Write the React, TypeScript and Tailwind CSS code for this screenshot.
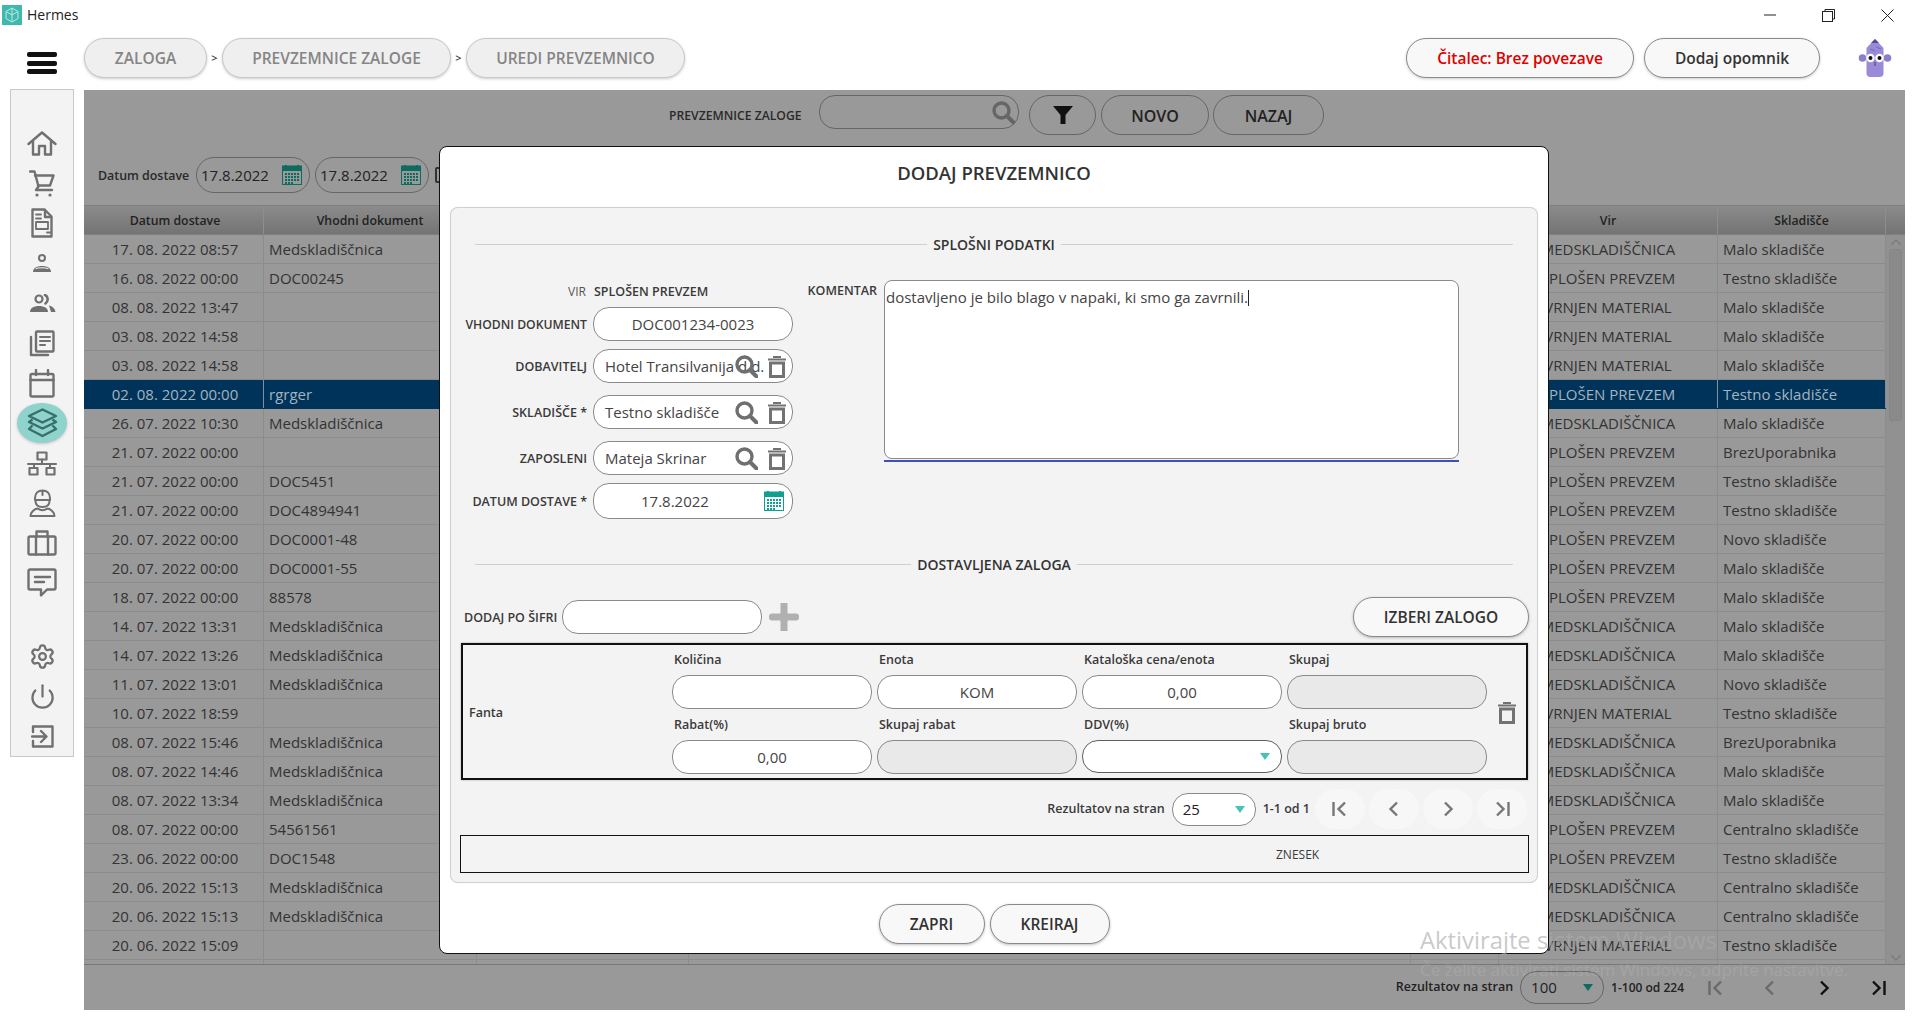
import React from "react";
import { Settings, Power } from "lucide-react";

const M = "Medskladiščnica";
const rows: [string, string, string, string][] = [
  ["17. 08. 2022 08:57", M, "MEDSKLADIŠČNICA", "Malo skladišče"],
  ["16. 08. 2022 00:00", "DOC00245", "SPLOŠEN PREVZEM", "Testno skladišče"],
  ["08. 08. 2022 13:47", "", "VRNJEN MATERIAL", "Malo skladišče"],
  ["03. 08. 2022 14:58", "", "VRNJEN MATERIAL", "Malo skladišče"],
  ["03. 08. 2022 14:58", "", "VRNJEN MATERIAL", "Malo skladišče"],
  ["02. 08. 2022 00:00", "rgrger", "SPLOŠEN PREVZEM", "Testno skladišče"],
  ["26. 07. 2022 10:30", M, "MEDSKLADIŠČNICA", "Malo skladišče"],
  ["21. 07. 2022 00:00", "", "SPLOŠEN PREVZEM", "BrezUporabnika"],
  ["21. 07. 2022 00:00", "DOC5451", "SPLOŠEN PREVZEM", "Testno skladišče"],
  ["21. 07. 2022 00:00", "DOC4894941", "SPLOŠEN PREVZEM", "Testno skladišče"],
  ["20. 07. 2022 00:00", "DOC0001-48", "SPLOŠEN PREVZEM", "Novo skladišče"],
  ["20. 07. 2022 00:00", "DOC0001-55", "SPLOŠEN PREVZEM", "Malo skladišče"],
  ["18. 07. 2022 00:00", "88578", "SPLOŠEN PREVZEM", "Malo skladišče"],
  ["14. 07. 2022 13:31", M, "MEDSKLADIŠČNICA", "Malo skladišče"],
  ["14. 07. 2022 13:26", M, "MEDSKLADIŠČNICA", "Malo skladišče"],
  ["11. 07. 2022 13:01", M, "MEDSKLADIŠČNICA", "Novo skladišče"],
  ["10. 07. 2022 18:59", "", "VRNJEN MATERIAL", "Testno skladišče"],
  ["08. 07. 2022 15:46", M, "MEDSKLADIŠČNICA", "BrezUporabnika"],
  ["08. 07. 2022 14:46", M, "MEDSKLADIŠČNICA", "Malo skladišče"],
  ["08. 07. 2022 13:34", M, "MEDSKLADIŠČNICA", "Malo skladišče"],
  ["08. 07. 2022 00:00", "54561561", "SPLOŠEN PREVZEM", "Centralno skladišče"],
  ["23. 06. 2022 00:00", "DOC1548", "SPLOŠEN PREVZEM", "Testno skladišče"],
  ["20. 06. 2022 15:13", M, "MEDSKLADIŠČNICA", "Centralno skladišče"],
  ["20. 06. 2022 15:13", M, "MEDSKLADIŠČNICA", "Centralno skladišče"],
  ["20. 06. 2022 15:09", "", "VRNJEN MATERIAL", "Testno skladišče"],
  ["", "", "", ""],
];

const ICON = "#707070";

function Svg({ w, h, children }: { w: number; h: number; children: React.ReactNode }) {
  return (
    <svg width={w} height={h} viewBox={`0 0 ${w} ${h}`} fill="none" stroke={ICON} strokeWidth={2.4} strokeLinejoin="round" strokeLinecap="round">
      {children}
    </svg>
  );
}

const HomeI = () => (
  <Svg w={30} h={25}>
    <path d="M1.5 13 15 1.5 28.5 13" />
    <path d="M6 10v13.500h6V15h6v8.500h6V10" />
  </Svg>
);
const CartI = () => (
  <Svg w={26} h={27}>
    <path d="M1 1.500h4.500L9.500 16.500 7 20h16" />
    <path d="M6 5.500h18.500L21 15.500H9" />
    <circle cx="8" cy="25" r="1.600" fill={ICON} stroke="none" />
    <circle cx="21" cy="25" r="1.600" fill={ICON} stroke="none" />
  </Svg>
);
const DocI = () => (
  <Svg w={22} h={30}>
    <path d="M1.500 1.500h12l7 7v20h-19z" />
    <path d="M14 2v7h6" />
    <path d="M5 6.500h5M5 10.500h5M16 24.500h3" strokeWidth={1.800} />
    <rect x="5" y="14" width="12" height="7" strokeWidth={1.800} />
  </Svg>
);
const PersonI = () => (
  <Svg w={20} h={19}>
    <circle cx="10" cy="4" r="3" strokeWidth={2} />
    <path d="M1 18c0-4 4-6 9-6s9 2 9 6z" fill={ICON} stroke="none" />
    <path d="M4 14.500c2-1 10-1 12 0" stroke="#f3f3f3" strokeWidth={1} />
  </Svg>
);
const PeopleI = () => (
  <Svg w={27} h={19}>
    <circle cx="10" cy="5" r="3.500" strokeWidth={2.200} />
    <path d="M1 18c0-4 4-6 9-6s9 2 9 6z" fill={ICON} stroke="none" />
    <path d="M16 1c3 1 3.800 6 .5 8.500" strokeWidth={2.600} />
    <path d="M20 11.500c3 .5 6 3 6.500 6.500H22z" fill={ICON} stroke="none" />
  </Svg>
);
const NewsI = () => (
  <Svg w={26} h={27}>
    <rect x="7" y="1.500" width="17.500" height="20" rx="1" />
    <path d="M11 7h10M11 11h10M11 15h5" strokeWidth={2} />
    <path d="M2 7v18h17" />
  </Svg>
);
const CalI = () => (
  <Svg w={26} h={29}>
    <rect x="1.500" y="5" width="23" height="22.500" rx="1.500" />
    <path d="M1.500 11h23M7 1v5M19 1v5" />
  </Svg>
);
const LayersI = () => (
  <svg width="31" height="30" viewBox="0 0 31 30" fill="none" stroke="#35706c" strokeWidth="2.400" strokeLinejoin="round">
    <path d="M15.500 1.500 29 8l-13.500 6.500L2 8z" />
    <path d="M5.500 11.500 2 14l13.500 6.500L29 14l-3.500-2.500" />
    <path d="M5.500 17.500 2 21l13.500 7L29 21l-3.500-3.500" />
  </svg>
);
const NetI = () => (
  <Svg w={30} h={25}>
    <rect x="10.500" y="1.500" width="9" height="7" strokeWidth={2.200} />
    <path d="M1 13h28M15 8.500V13M7 13v4M23 13v4" strokeWidth={2} />
    <rect x="2.500" y="17" width="8" height="6.500" strokeWidth={2.200} />
    <rect x="19.500" y="17" width="8" height="6.500" strokeWidth={2.200} />
  </Svg>
);
const WorkerI = () => (
  <Svg w={27} h={28}>
    <path d="M6 11V9c0-4.500 3-7.500 7.500-7.500S21 4.500 21 9v2z" strokeWidth={2} />
    <path d="M13.500 2v4" strokeWidth={2} />
    <path d="M6.500 12c0 4 3 6 7 6s7-2 7-6" strokeWidth={2} />
    <path d="M1.500 27c0-4 4-7 7-7.500 3 2 7 2 10 0 3 .5 7 3.500 7 7.500z" strokeWidth={2} />
  </Svg>
);
const BriefI = () => (
  <Svg w={30} h={26}>
    <rect x="1.500" y="6.500" width="27" height="18" rx="1.500" />
    <path d="M9.500 6.500V1.500h11v5M9 6.500v18M21 6.500v18" />
  </Svg>
);
const ChatI = () => (
  <Svg w={30} h={30}>
    <path d="M3 1.500h24a1.500 1.500 0 0 1 1.500 1.500v17a1.500 1.500 0 0 1-1.500 1.500H20l-6 6v-6H3A1.500 1.500 0 0 1 1.500 20V3A1.500 1.500 0 0 1 3 1.500z" />
    <path d="M8 9h15M8 14h9" />
  </Svg>
);
const ExitI = () => (
  <Svg w={23} h={23}>
    <path d="M2 7V1.500h19.500v20H2V16" />
    <path d="M1 11.500h14M10 6l5.500 5.500L10 17" />
  </Svg>
);

function SearchI({ c = "#6f6f6f" }: { c?: string }) {
  return (
    <svg width="23" height="23" viewBox="0 0 23 23" fill="none" stroke={c}>
      <circle cx="9.500" cy="9.500" r="7.500" strokeWidth="3.400" />
      <path d="M15 15l6.500 6.500" strokeWidth="4" strokeLinecap="round" />
    </svg>
  );
}
function TrashI({ c = "#727272" }: { c?: string }) {
  return (
    <svg width="18" height="22" viewBox="0 0 18 22" fill="none" stroke={c}>
      <path d="M0 3.500h18" strokeWidth="2" />
      <path d="M5 1h8" strokeWidth="2" />
      <rect x="2.500" y="7" width="13" height="13.500" strokeWidth="3" />
    </svg>
  );
}
function CalendarI({ c }: { c: string }) {
  const dots: React.ReactNode[] = [];
  [8, 11, 14, 17].forEach((y) =>
    [3, 6, 9, 12, 15].forEach((x) => {
      if (!(y === 17 && x > 9)) dots.push(<rect key={`${x}-${y}`} x={x} y={y} width="2" height="2" fill={c} />);
    })
  );
  return (
    <svg width="20" height="20" viewBox="0 0 20 20">
      <rect x=".5" y="1" width="19" height="18.500" fill="none" stroke={c} />
      <rect x="0" y="1" width="20" height="5" fill={c} />
      <rect x="3" y="0" width="2" height="2" fill={c} />
      <rect x="15" y="0" width="2" height="2" fill={c} />
      {dots}
    </svg>
  );
}
function Tri({ c }: { c: string }) {
  return (
    <svg width="10" height="7" viewBox="0 0 10 7">
      <path d="M0 0h10L5 7z" fill={c} />
    </svg>
  );
}
function Chev({ d, c }: { d: string; c: string }) {
  return (
    <svg width="18" height="18" viewBox="0 0 18 18" fill="none" stroke={c} strokeWidth="2.400">
      <path d={d} />
    </svg>
  );
}
const first = "M2.500 2v14M14 2.500 7.500 9l6.500 6.500";
const prev = "M12 2.500 5.500 9l6.500 6.500";
const next = "M6 2.500 12.500 9 6 15.500";
const last = "M4 2.500 10.500 9 4 15.500M15.500 2v14";

function Pager({ enabled, className = "" }: { enabled?: boolean; className?: string }) {
  return (
    <div className={`flex gap-[4px] ${className}`}>
      {[first, prev, next, last].map((d, i) => (
        <div key={i} className={`flex h-[40px] w-[50px] items-center justify-center rounded-full ${enabled ? "" : "bg-[#f7f7f7]"}`}>
          <Chev d={d} c={enabled ? (i > 1 ? "#111111" : "#6a6a6a") : "#777777"} />
        </div>
      ))}
    </div>
  );
}

function Crumb({ w, children }: { w: string; children: React.ReactNode }) {
  return (
    <div className={`flex h-[40px] ${w} items-center justify-center rounded-[20px] border-[1.5px] border-[#c8c8c8] bg-[#efefef] pt-[2px] text-[15.500px] font-semibold text-[#858585] shadow-[0_1px_3px_rgba(0,0,0,0.2)]`}>
      {children}
    </div>
  );
}

const pill = "h-[34px] w-[200px] rounded-[16px] border-[1.5px] border-[#8a8a8a] bg-white text-[15px] text-[#444444]";
const disabled = "h-[34px] w-[200px] rounded-[16px] border-[1.5px] border-[#8a8a8a] bg-[#e9e9e9]";
const fieldLabel = "w-[136px] shrink-0 pt-[2px] text-right text-[12.500px] font-semibold text-[#3a3a3a]";
const btn = "flex items-center justify-center rounded-[20px] border-[1.5px] pt-[2px] font-semibold";

function Section({ title }: { title: string }) {
  return (
    <div className="mx-[24px] flex h-[20px] items-center gap-[6px]">
      <div className="h-px flex-1 bg-[#cfcfcf]" />
      <span className="text-[14px] font-semibold text-[#333333]">{title}</span>
      <div className="h-px flex-1 bg-[#cfcfcf]" />
    </div>
  );
}

function LookupRow({ label, value, className }: { label: string; value: string; className: string }) {
  return (
    <div className={`flex items-center gap-[6px] ${className}`}>
      <span className={fieldLabel}>{label}</span>
      <div className={`relative flex items-center pl-[11px] ${pill}`}>
        <span className="whitespace-nowrap">{value}</span>
        <div className="absolute right-[6px] top-[5px] flex items-center gap-[10px]">
          <SearchI />
          <TrashI />
        </div>
      </div>
    </div>
  );
}

function ItemField({ label, children }: { label: string; children: React.ReactNode }) {
  return (
    <div className="flex flex-col">
      <div className="flex h-[30px] items-center pl-[2px] text-[12.500px] font-semibold text-[#3a3a3a]">{label}</div>
      {children}
    </div>
  );
}

function Modal() {
  return (
    <div className="absolute left-[439px] top-[146px] flex h-[808px] w-[1110px] flex-col rounded-[8px] border-[1.5px] border-[#111111] bg-white px-[10px]">
      <div className="flex h-[60px] items-center justify-center pb-[9px] text-[18.500px] font-semibold text-[#333333]">DODAJ PREVZEMNICO</div>
      <div className="flex h-[676px] flex-col rounded-[8px] border border-[#d0d0d0] bg-[#f3f3f3] pt-[26px] shadow-[0_0_1px_rgba(0,0,0,0.15)]">
        <Section title="SPLOŠNI PODATKI" />
        <div className="mt-[26px] flex">
          <div className="flex w-[349px] flex-col">
            <div className="flex h-[24px] items-center gap-[8px]">
              <span className="w-[135px] shrink-0 text-right text-[12px] text-[#555555]">VIR</span>
              <span className="text-[12.500px] font-semibold text-[#3a3a3a]">SPLOŠEN PREVZEM</span>
            </div>
            <div className="mt-[3px] flex items-center gap-[6px]">
              <span className={`${fieldLabel} !text-[12.200px]`}>VHODNI DOKUMENT</span>
              <div className={`flex items-center justify-center ${pill}`}>DOC001234-0023</div>
            </div>
            <LookupRow className="mt-[8px]" label="DOBAVITELJ" value="Hotel Transilvanija d.d." />
            <LookupRow className="mt-[12px]" label="SKLADIŠČE *" value="Testno skladišče" />
            <LookupRow className="mt-[12px]" label="ZAPOSLENI" value="Mateja Skrinar" />
            <div className="mt-[8px] flex items-center gap-[6px]">
              <span className={fieldLabel}>DATUM DOSTAVE *</span>
              <div className={`flex !h-[36px] items-center justify-between pl-[47px] pr-[8px] ${pill}`}>
                <span>17.8.2022</span>
                <CalendarI c="#11a08f" />
              </div>
            </div>
          </div>
          <div className="flex">
            <div className="w-[84px] pr-[7px] pt-[2px] text-right text-[12.500px] font-semibold text-[#3a3a3a]">KOMENTAR</div>
            <div className="flex w-[575px] flex-col">
              <div className="h-[179px] rounded-[8px] border border-[#8a8a8a] bg-white pl-[1px] pt-[5px] text-[15px] text-[#444444]">
                dostavljeno je bilo blago v napaki, ki smo ga zavrnili.<span className="inline-block h-[16px] w-px translate-y-[3px] bg-[#222222]" />
              </div>
              <div className="mt-px h-[2px] bg-[#3f51b5]" />
            </div>
          </div>
        </div>
        <div className="mt-[35px]">
          <Section title="DOSTAVLJENA ZALOGA" />
        </div>
        <div className="mt-[23px] flex h-[40px] items-center pl-[13px] pr-[8px]">
          <span className="w-[91px] whitespace-nowrap pt-[2px] text-[12.500px] font-semibold text-[#3a3a3a]">DODAJ PO ŠIFRI</span>
          <div className={`ml-[7px] ${pill}`} />
          <svg className="ml-[7px]" width="30" height="28" viewBox="0 0 30 28" fill="#b0b0b0">
            <rect x="0" y="10.500" width="30" height="7" rx="3" />
            <rect x="11.500" y="0" width="7" height="28" />
          </svg>
          <div className={`ml-auto h-[40px] w-[176px] border-[#8a8a8a] bg-[#f8f8f8] text-[15.500px] text-[#333333] shadow-[0_1px_3px_rgba(0,0,0,0.25)] ${btn}`}>IZBERI ZALOGO</div>
        </div>
        <div className="ml-[10px] mr-[9px] mt-[6px] flex h-[137px] border-2 border-[#111111] shadow-[0_0_2px_rgba(0,0,0,0.3)]">
          <div className="flex w-[209px] items-center pl-[6px] pt-[3px] text-[12.500px] font-semibold text-[#3a3a3a]">Fanta</div>
          <div className="grid grid-cols-[200px_200px_200px_200px] content-start gap-x-[5px] gap-y-[1px]">
            <ItemField label="Količina"><div className={pill} /></ItemField>
            <ItemField label="Enota"><div className={`flex items-center justify-center ${pill}`}>KOM</div></ItemField>
            <ItemField label="Kataloška cena/enota"><div className={`flex items-center justify-center ${pill}`}>0,00</div></ItemField>
            <ItemField label="Skupaj"><div className={disabled} /></ItemField>
            <ItemField label="Rabat(%)"><div className={`flex items-center justify-center ${pill}`}>0,00</div></ItemField>
            <ItemField label="Skupaj rabat"><div className={disabled} /></ItemField>
            <ItemField label="DDV(%)">
              <div className={`flex !h-[33px] items-center justify-end !border-[#5f5f5f] pr-[11px] ${pill}`}>
                <Tri c="#45c4b4" />
              </div>
            </ItemField>
            <ItemField label="Skupaj bruto"><div className={disabled} /></ItemField>
          </div>
          <div className="flex w-[39px] items-center justify-center pt-[3px]">
            <TrashI />
          </div>
        </div>
        <div className="mt-[9px] flex h-[40px] items-center justify-end gap-[7px] pr-[10px]">
          <span className="text-[12.500px] font-semibold text-[#3a3a3a]">Rezultatov na stran</span>
          <div className="flex h-[33px] w-[84px] items-center justify-between rounded-[16px] border-[1.5px] border-[#8a8a8a] bg-white pl-[10px] pr-[10px] text-[15px] text-[#222222]">
            <span>25</span>
            <Tri c="#45c4b4" />
          </div>
          <span className="text-[12.500px] font-semibold text-[#3a3a3a]">1-1 od 1</span>
          <Pager className="-ml-[2px]" />
        </div>
        <div className="ml-[9px] mr-[8px] mt-[6px] flex h-[38px] items-center border-[1.5px] border-[#111111] pl-[815px] pt-[1px] text-[12px] text-[#3a3a3a]">ZNESEK</div>
      </div>
      <div className="flex justify-center gap-[5px] pt-[21px]">
        <div className={`h-[40px] w-[106px] border-[#8a8a8a] bg-[#f8f8f8] text-[15.500px] text-[#333333] shadow-[0_1px_3px_rgba(0,0,0,0.25)] ${btn}`}>ZAPRI</div>
        <div className={`h-[40px] w-[120px] border-[#8a8a8a] bg-[#f8f8f8] text-[15.500px] text-[#333333] shadow-[0_1px_3px_rgba(0,0,0,0.25)] ${btn}`}>KREIRAJ</div>
      </div>
    </div>
  );
}

const COLS = "grid grid-cols-[180px_213px_212px_722px_88px_219px_168px]";

function Table() {
  const heads = ["Datum dostave", "Vhodni dokument", "", "", "", "Vir", "Skladišče"];
  return (
    <div className="mt-[12px] flex h-[760px] flex-col overflow-hidden border-b border-[#777777]">
      <div className="flex h-[30px] shrink-0 border-y border-[#7f7f7f] bg-gradient-to-b from-[#8b8b8b] to-[#747474]">
        <div className={`w-[1802px] ${COLS}`}>
          {heads.map((h, i) => (
            <div key={i} className={`flex items-center justify-center border-r border-[#8e8e8e] pt-[3px] text-[12.300px] font-semibold text-[#222222] ${i === 0 ? "pl-[3px]" : ""}`}>{h}</div>
          ))}
        </div>
      </div>
      <div className="flex min-h-0 flex-1">
        <div className="w-[1802px]">
          {rows.map((r, i) => {
            const sel = i === 5;
            const cell = `flex items-center overflow-hidden whitespace-nowrap border-r ${sel ? "border-[#7f8f9c]" : "border-[#8c8c8c]"}`;
            return (
              <div key={i} className={`h-[29px] border-b text-[15px] ${COLS} ${sel ? "border-[#003359] bg-[#003359] text-[#a3b3c0]" : "border-[#8c8c8c] text-[#333333]"}`}>
                <div className={`${cell} justify-center pl-[3px]`}>{r[0]}</div>
                <div className={`${cell} pl-[5px]`}>{r[1]}</div>
                <div className={cell} />
                <div className={cell} />
                <div className={cell} />
                <div className={`${cell} justify-center`}>{r[2]}</div>
                <div className={`${cell} pl-[5px]`}>{r[3]}</div>
              </div>
            );
          })}
        </div>
        <div className="flex w-[19px] flex-col items-center bg-[#919191]">
          <svg className="mt-[3px]" width="14" height="9" viewBox="0 0 14 9" fill="none" stroke="#7a7a7a" strokeWidth="1.400"><path d="M2 7l5-5 5 5" /></svg>
          <div className="mt-[2px] h-[172px] w-[13px] rounded-[3px] border border-[#858585] bg-[#8a8a8a]" />
          <div className="flex-1" />
          <svg className="mb-[2px]" width="14" height="9" viewBox="0 0 14 9" fill="none" stroke="#7a7a7a" strokeWidth="1.400"><path d="M2 2l5 5 5-5" /></svg>
        </div>
      </div>
    </div>
  );
}

function DatePill({ className = "" }: { className?: string }) {
  return (
    <div className={`flex h-[36px] w-[114px] items-center justify-between rounded-[18px] border-[1.5px] border-[#666666] pl-[4px] pr-[7px] text-[15px] text-[#222222] ${className}`}>
      <span>17.8.2022</span>
      <CalendarI c="#0d6b60" />
    </div>
  );
}

export default function App() {
  const navTop = [HomeI, CartI, DocI, PersonI, PeopleI, NewsI, CalI];
  const navBottom = [NetI, WorkerI, BriefI, ChatI];
  return (
    <div className="relative h-[1027px] w-[1920px] overflow-hidden bg-white font-['Open_Sans',sans-serif]">
      {/* window title bar */}
      <div className="flex h-[30px] items-center">
        <svg className="ml-[2px]" width="20" height="20" viewBox="0 0 20 20">
          <rect width="20" height="20" fill="#3fb8ae" />
          <path d="M10 3 16 6.500v7L10 17l-6-3.500v-7zM10 3v14M4 6.500 10 10l6-3.500" fill="none" stroke="#bfe9e4" strokeWidth="1" />
        </svg>
        <span className="ml-[5px] pb-[2px] text-[14px] text-[#222222]">Hermes</span>
        <div className="ml-auto flex items-center">
          <svg width="12" height="12" viewBox="0 0 12 12" stroke="#222222" fill="none"><path d="M0 6h12" /></svg>
          <svg className="ml-[46px]" width="13" height="13" viewBox="0 0 13 13" stroke="#222222" fill="none"><rect x=".5" y="2.500" width="10" height="10" /><path d="M3 2.500V.5h9.500V10h-2" /></svg>
          <svg className="ml-[46px] mr-[26px]" width="13" height="13" viewBox="0 0 13 13" stroke="#222222" fill="none"><path d="M.5.5l12 12M12.500.5l-12 12" /></svg>
        </div>
      </div>
      {/* toolbar */}
      <div className="flex h-[59px] items-start pt-[8px]">
        <div className="ml-[27px] mt-[14px] flex h-[22px] w-[30px] flex-col justify-between">
          <div className="h-[5px] rounded-[2px] bg-[#111111]" />
          <div className="h-[5px] rounded-[2px] bg-[#111111]" />
          <div className="h-[5px] rounded-[2px] bg-[#111111]" />
        </div>
        <div className="ml-[27px] flex items-center">
          <Crumb w="w-[123px]">ZALOGA</Crumb>
          <span className="w-[15px] text-center text-[11px] font-semibold text-[#333333]">&gt;</span>
          <Crumb w="w-[229px]">PREVZEMNICE ZALOGE</Crumb>
          <span className="w-[15px] text-center text-[11px] font-semibold text-[#333333]">&gt;</span>
          <Crumb w="w-[219px]">UREDI PREVZEMNICO</Crumb>
        </div>
        <div className="ml-auto flex items-center">
          <div className={`h-[40px] w-[228px] border-[#8a8a8a] bg-[#f8f8f8] text-[15.500px] text-[#e00000] shadow-[0_1px_3px_rgba(0,0,0,0.2)] ${btn}`}>Čitalec: Brez povezave</div>
          <div className={`ml-[10px] h-[40px] w-[176px] border-[#8a8a8a] bg-[#f8f8f8] text-[15.500px] text-[#333333] shadow-[0_1px_3px_rgba(0,0,0,0.2)] ${btn}`}>Dodaj opomnik</div>
          <svg className="ml-[38px] mr-[28px]" width="34" height="40" viewBox="0 0 34 40">
            <circle cx="4.500" cy="20" r="3.800" fill="#8b7fc8" />
            <circle cx="29.500" cy="20" r="3.800" fill="#8b7fc8" />
            <path d="M8.500 10 17 1l8.500 9v25a4 4 0 0 1-4 4h-9a4 4 0 0 1-4-4z" fill="#9a8ad8" />
            <path d="M13 5 17 1l4 4z" fill="#544a9c" />
            <path d="M12 11l5 2M18 9l5 2" stroke="#7767bd" strokeWidth="1" />
            <circle cx="12.500" cy="20" r="4.200" fill="#ffffff" />
            <circle cx="21.500" cy="20" r="4.200" fill="#ffffff" />
            <circle cx="12.500" cy="20" r="2" fill="#111111" />
            <circle cx="21.500" cy="20" r="2" fill="#111111" />
            <path d="M17 24v4" stroke="#443a80" strokeWidth="1" />
          </svg>
        </div>
      </div>
      {/* body */}
      <div className="flex">
        <aside className="ml-[10px] flex h-[668px] w-[64px] flex-col items-center border border-[#c8c8c8] bg-[#f3f3f3] pt-[33px]">
          {navTop.map((I, i) => (
            <div key={i} className="flex h-[40px] items-center justify-center"><I /></div>
          ))}
          <div className="flex h-[40px] w-[50px] items-center justify-center rounded-[50%] bg-[#8fd3cc] shadow-[0_1px_3px_rgba(0,0,0,0.2)]"><LayersI /></div>
          {navBottom.map((I, i) => (
            <div key={i} className="flex h-[40px] items-center justify-center"><I /></div>
          ))}
          <div className="h-[33px]" />
          <div className="flex h-[40px] items-center justify-center"><Settings size={27} color={ICON} strokeWidth={2} /></div>
          <div className="flex h-[40px] items-center justify-center"><Power size={27} color={ICON} strokeWidth={2} /></div>
          <div className="flex h-[40px] items-center justify-center"><ExitI /></div>
        </aside>
        <main className="ml-[10px] mt-px flex h-[920px] w-[1821px] flex-col bg-[#999999] pt-[5px]">
          <div className="flex h-[40px] items-start">
            <span className="ml-[585px] mt-[12px] w-[133px] whitespace-nowrap text-[12.200px] font-semibold text-[#2a2a2a]">PREVZEMNICE ZALOGE</span>
            <div className="ml-[17px] flex h-[34px] w-[200px] items-center justify-end rounded-[16px] border-[1.5px] border-[#666666] pr-[3px]">
              <SearchI c="#666666" />
            </div>
            <div className="ml-[10px] flex h-[40px] w-[67px] items-center justify-center rounded-[20px] border-[1.5px] border-[#666666]">
              <svg width="20" height="20" viewBox="0 0 20 20"><path d="M0 1h20L12.500 10v9H7.500v-9z" fill="#111111" /></svg>
            </div>
            <div className="ml-[5px] flex h-[40px] w-[108px] items-center justify-center rounded-[20px] border-[1.5px] border-[#666666] pt-[1px] text-[16px] font-semibold text-[#222222]">NOVO</div>
            <div className="ml-[4px] flex h-[40px] w-[111px] items-center justify-center rounded-[20px] border-[1.5px] border-[#666666] pt-[1px] text-[16px] font-semibold text-[#222222]">NAZAJ</div>
          </div>
          <div className="mt-[22px] flex h-[36px] items-center">
            <span className="ml-[14px] w-[98px] whitespace-nowrap pt-[2px] text-[12.400px] font-semibold text-[#2a2a2a]">Datum dostave</span>
            <DatePill />
            <DatePill className="ml-[5px]" />
            <div className="ml-[6px] h-[16px] w-[16px] rounded-[2px] border-2 border-[#333333]" />
          </div>
          <Table />
          <div className="flex flex-1 items-center justify-end gap-[7px] pr-[2px]">
            <span className="text-[12.500px] font-semibold text-[#222222]">Rezultatov na stran</span>
            <div className="flex h-[33px] w-[84px] items-center justify-between rounded-[16px] border-[1.5px] border-[#666666] pl-[10px] pr-[10px] text-[15px] text-[#222222]">
              <span>100</span>
              <Tri c="#0d6b60" />
            </div>
            <span className="text-[12px] font-semibold text-[#222222]">1-100 od 224</span>
            <Pager enabled />
          </div>
        </main>
      </div>
      <Modal />
      {/* activation watermark */}
      <div className="pointer-events-none absolute left-[1420px] top-[923px] whitespace-nowrap">
        <div className="text-[23.800px] leading-[34px] text-[#ababab]/65">Aktivirajte sistem Windows</div>
        <div className="mt-[2px] text-[17px] leading-[22px] text-white/10">Če želite aktivirati sistem Windows, odprite nastavitve.</div>
      </div>
    </div>
  );
}
